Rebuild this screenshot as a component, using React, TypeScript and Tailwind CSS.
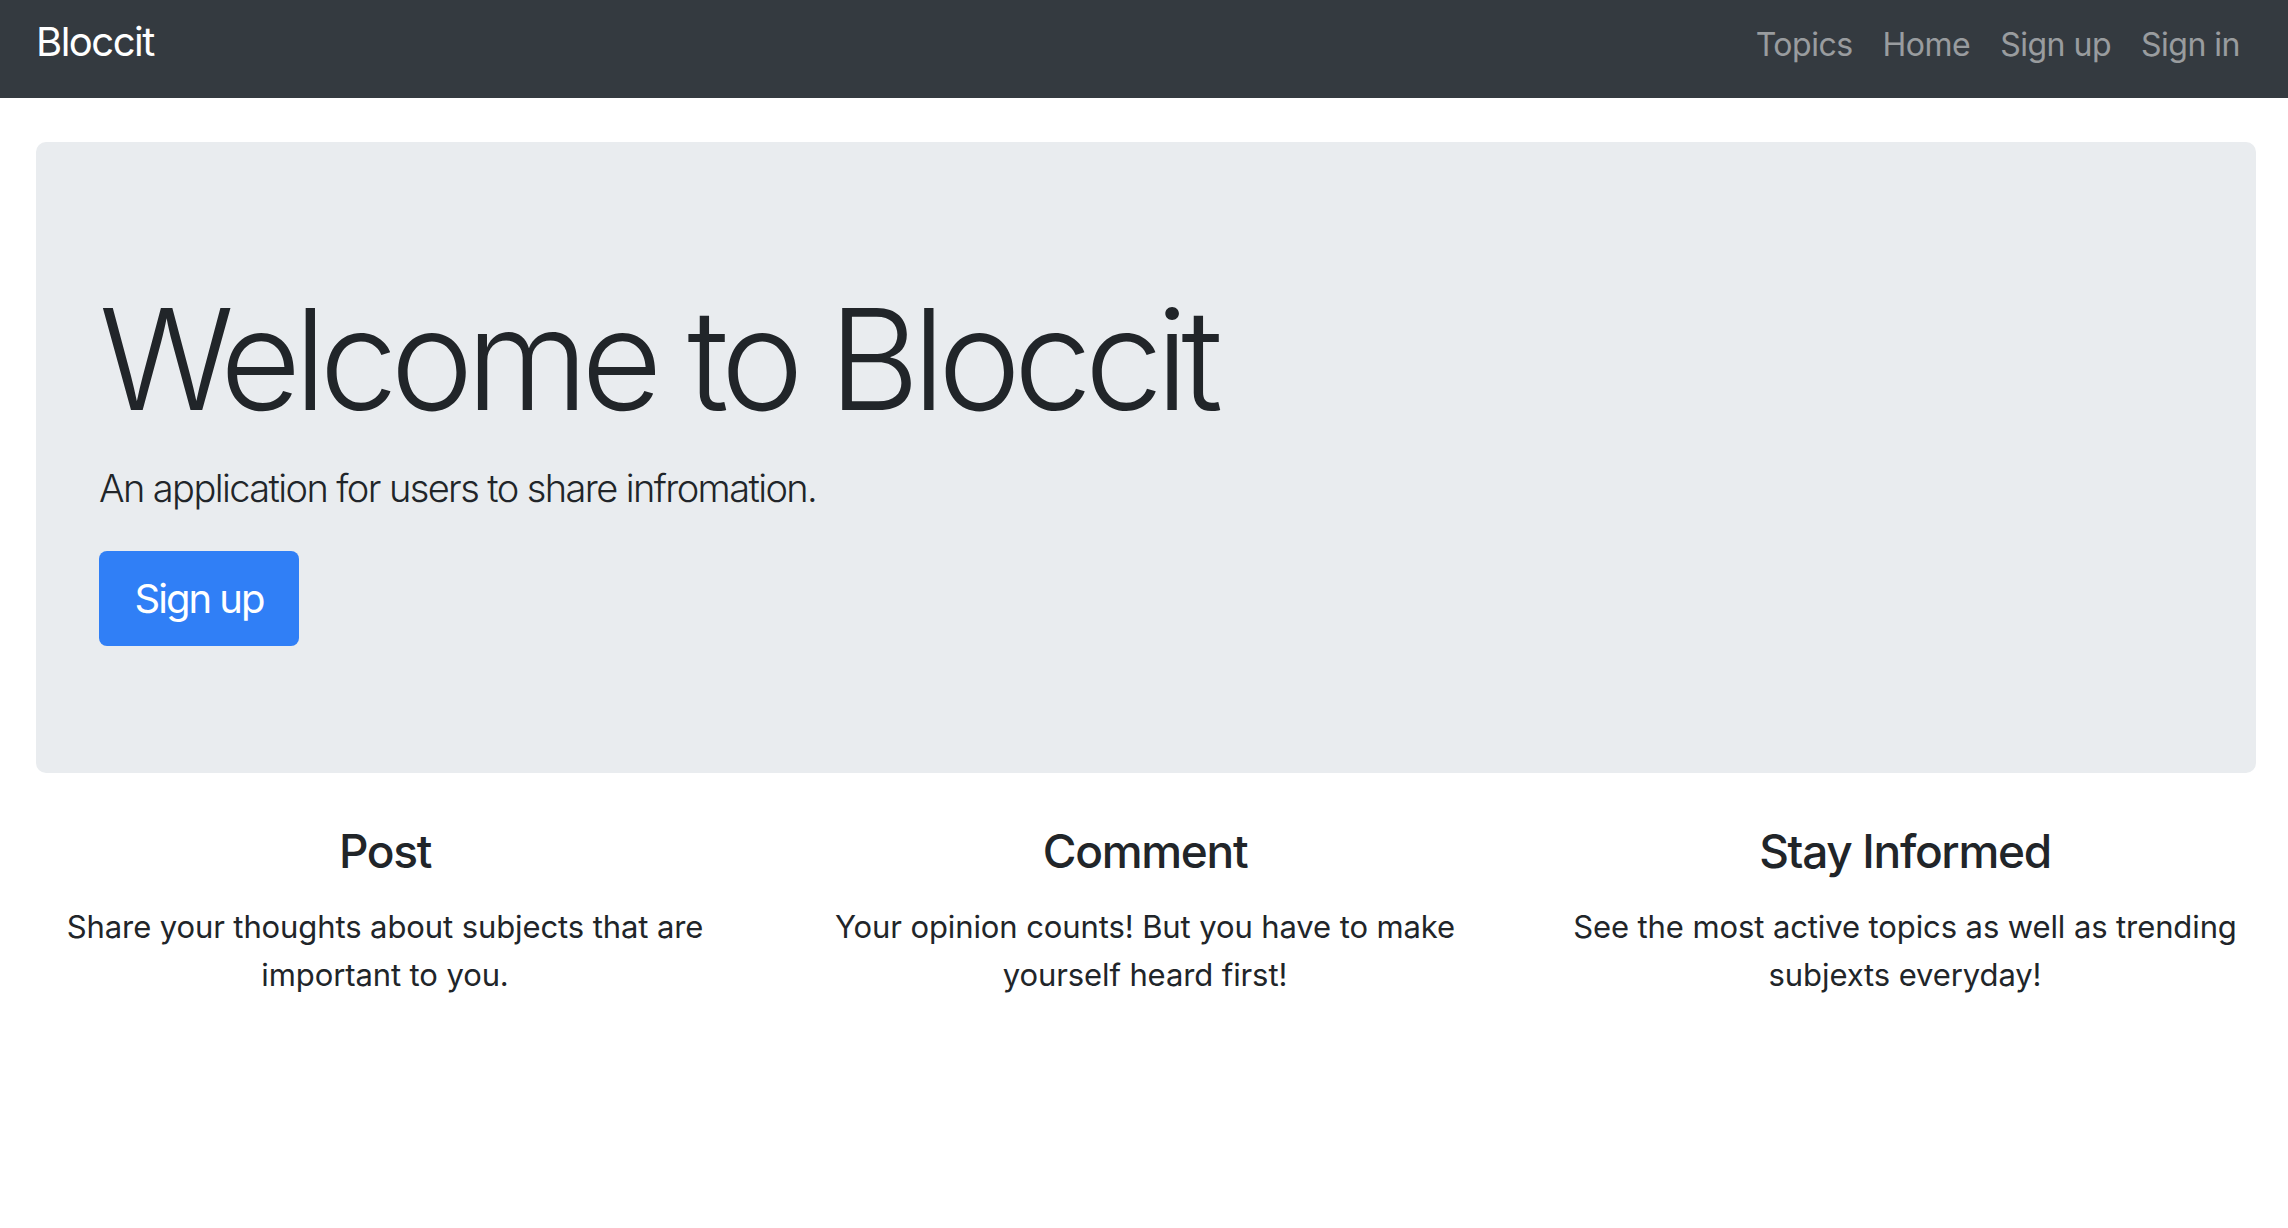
const features = [
  {
    title: "Post",
    body: "Share your thoughts about subjects that are important to you.",
  },
  {
    title: "Comment",
    body: "Your opinion counts! But you have to make yourself heard first!",
  },
  {
    title: "Stay Informed",
    body: "See the most active topics as well as trending subjexts everyday!",
  },
];

export default function App() {
  return (
    <div className="min-h-screen bg-white text-[#212529] font-['Inter','Liberation_Sans',sans-serif]">
      {/* Navbar */}
      <nav className="h-[98px] bg-[#343a40] flex items-start justify-between pl-[36px] pr-[33px]">
        <a className="mt-[22px] text-white text-[40px] leading-[40px] tracking-[-1.5px]">Bloccit</a>
        <ul className="mt-[29px] flex text-[32px] leading-[32px] text-white/50 tracking-[-0.5px]">
          <li className="px-[15px]">Topics</li>
          <li className="px-[15px]">Home</li>
          <li className="px-[15px]">Sign up</li>
          <li className="px-[15px]">Sign in</li>
        </ul>
      </nav>

      {/* Jumbotron */}
      <section className="ml-[36px] mr-[32px] mt-[44px] h-[631px] rounded-[10px] bg-[#e9ecef] pl-[63px] pt-[147px]">
        <h1 className="text-[140px] leading-[140px] font-light tracking-[-7.2px]">Welcome to Bloccit</h1>
        <p className="mt-[40px] text-[38px] leading-[38px] font-light tracking-[-1.6px]">
          An application for users to share infromation.
        </p>
        <button className="mt-[44px] w-[200px] h-[95px] rounded-[8px] bg-[#307ff6] text-white text-[40px] leading-[40px] tracking-[-2px] flex items-center justify-center">
          Sign up
        </button>
      </section>

      {/* Features */}
      <div className="grid grid-cols-3 mt-[55px] pl-[5px] pr-[3px]">
        {features.map((f) => (
          <div key={f.title} className="px-[30px] text-center">
            <h4 className="text-[46px] leading-[46px] font-medium tracking-[-1.3px]">{f.title}</h4>
            <p className="mt-[29px] text-[31px] leading-[48px] tracking-[-0.1px]">{f.body}</p>
          </div>
        ))}
      </div>
    </div>
  );
}
